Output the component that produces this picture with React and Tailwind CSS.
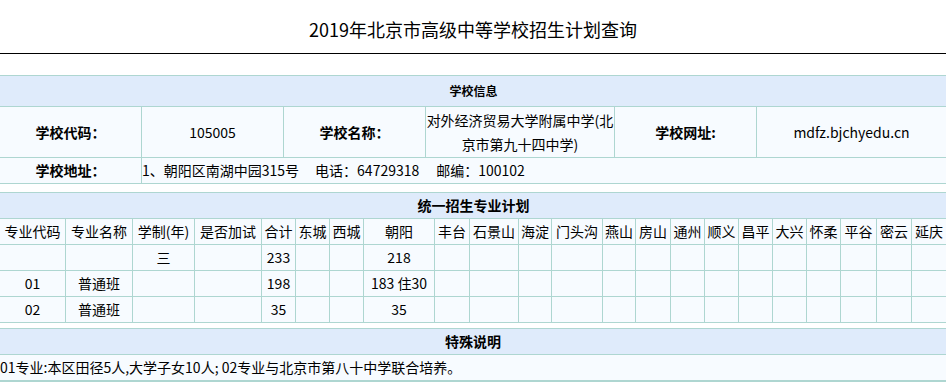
const font = { fontFamily: '"Noto Sans CJK SC", "Liberation Sans", sans-serif' };

const districts = ['丰台', '石景山', '海淀', '门头沟', '燕山', '房山', '通州', '顺义', '昌平', '大兴', '怀柔', '平谷', '密云', '延庆'];

const heads = ['专业代码', '专业名称', '学制(年)', '是否加试', '合计', '东城', '西城', '朝阳', ...districts];

const rows = [
    ['', '', '三', '', '233', '', '', '218'],
    ['01', '普通班', '', '', '198', '', '', '183 住30'],
    ['02', '普通班', '', '', '35', '', '', '35'],
];

const Cell = ({ children, className = '' }) => (
    <div className={`border-r border-b border-[#aed6d1] bg-[#f7fbff] flex items-center justify-center text-center ${className}`}>{children}</div>
);

const App = () => {
    return (
        <div className="w-[946px] h-[382px] overflow-hidden bg-white text-black text-[14px]" style={font}>
            {/* page title */}
            <div className="h-[54px] border-b border-black flex items-center justify-center pt-[5px] text-[18px]">
                2019年北京市高级中等学校招生计划查询
            </div>

            {/* 学校信息 */}
            <div className="mt-[21px] w-[947px] border-t border-[#aed6d1] grid grid-cols-[142px_142px_142px_189px_142px_190px] grid-rows-[31px_51px_26px]">
                <div className="col-span-6 border-b border-[#aed6d1] bg-[#dfebfb] flex items-center justify-center text-[12px] font-bold">学校信息</div>
                <Cell className="font-bold">学校代码：</Cell>
                <Cell>105005</Cell>
                <Cell className="font-bold">学校名称：</Cell>
                <Cell className="leading-[24px]">对外经济贸易大学附属中学(北京市第九十四中学)</Cell>
                <Cell className="font-bold">学校网址:</Cell>
                <Cell>mdfz.bjchyedu.cn</Cell>
                <Cell className="font-bold">学校地址：</Cell>
                <Cell className="col-span-5 !justify-start">
                    1、朝阳区南湖中园315号
                    <span className="ml-[16px]">电话：64729318</span>
                    <span className="ml-[17px]">邮编：100102</span>
                </Cell>
            </div>

            {/* 统一招生专业计划 */}
            <div className="mt-[8px] w-[947px] border-t border-[#aed6d1] grid grid-cols-[66px_67px_62px_67px_34px_34px_34px_71px_35px_49px_33px_51px_33px_35px_34px_34px_34px_34px_34px_36px_35px_35px] auto-rows-[26px]">
                <div className="col-span-22 border-b border-[#aed6d1] bg-[#dfebfb] flex items-center justify-center font-bold">统一招生专业计划</div>
                {heads.map(h => <Cell key={h} className="whitespace-nowrap">{h}</Cell>)}
                {rows.map((row, i) =>
                    heads.map((h, j) => <Cell key={`${i}-${j}`} className="whitespace-nowrap">{row[j] || ''}</Cell>)
                )}
            </div>

            {/* 特殊说明 */}
            <div className="mt-[5px] border-t border-[#aed6d1]">
                <div className="h-[26px] border-b border-[#aed6d1] bg-[#dfebfb] flex items-center justify-center font-bold">特殊说明</div>
                <div className="h-[27px] border-b-2 border-[#aed6d1] bg-[#f7fbff] flex items-center">
                    01专业:本区田径5人,大学子女10人; 02专业与北京市第八十中学联合培养。
                </div>
            </div>
        </div>
    );
};

export default App;
